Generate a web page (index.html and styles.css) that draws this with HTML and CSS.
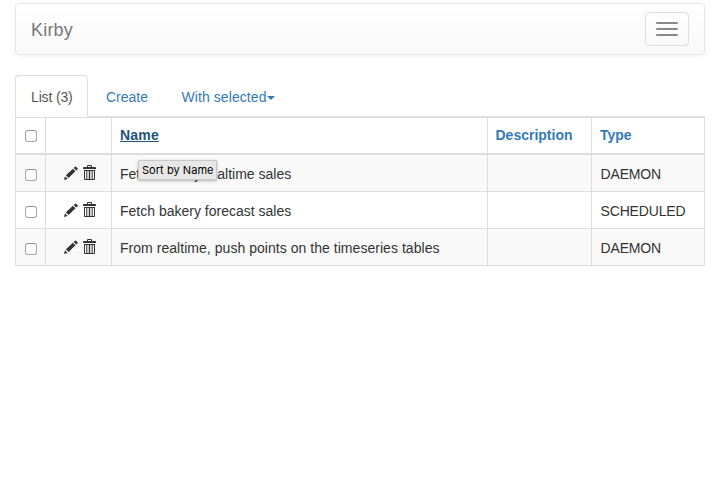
FILE: index.html
```html
<!DOCTYPE html>
<html lang="en">
<head>
<meta charset="utf-8">
<title>Kirby</title>
<link rel="stylesheet" href="styles.css">
</head>
<body>
<svg class="sprite" aria-hidden="true">
  <symbol id="pencil" viewBox="0 0 14 14">
    <path d="M0 14l1-3.700 2.700 2.700zM1.900 9.300l7-6.600 2.600 2.600-7 6.600zM9.700 2l1.300-1.300q.5-.5 1 0l1.600 1.600q.4.400 0 .9l-1.300 1.300z"/>
  </symbol>
  <symbol id="trash" viewBox="0 0 13 16">
    <path fill-rule="evenodd" d="M4 2V1q0-1 1-1h3q1 0 1 1v1h3q1 0 1 1v1H0V3q0-1 1-1zM5 1v1h3V1zM1 5h11v9q0 1-1 1H2q-1 0-1-1zM2 6v8h1.300V6zM4.300 6v8h1.500V6zM7.200 6v8h1.500V6zM9.700 6v8H11V6z"/>
  </symbol>
</svg>
<nav class="navbar">
  <a class="brand">Kirby</a>
  <button class="toggle" aria-label="Menu"><span></span><span></span><span></span></button>
</nav>
<ul class="tabs">
  <li class="tab active">List (3)</li>
  <li class="tab create">Create</li>
  <li class="tab selected">With selected<i class="caret"></i></li>
</ul>
<table class="list">
  <colgroup><col class="c-check"><col class="c-act"><col class="c-name"><col class="c-desc"><col class="c-type"></colgroup>
  <thead>
    <tr><th class="check"><input type="checkbox"></th><th></th><th><a class="hover">Name</a></th><th><a class="desc">Description</a></th><th><a>Type</a></th></tr>
  </thead>
  <tbody>
    <tr><td class="check"><input type="checkbox"></td><td><div class="actions"><svg class="pencil"><use href="#pencil"/></svg><svg class="trash"><use href="#trash"/></svg></div></td><td>Fetch bakery realtime sales</td><td></td><td class="type">DAEMON</td></tr>
    <tr><td class="check"><input type="checkbox"></td><td><div class="actions"><svg class="pencil"><use href="#pencil"/></svg><svg class="trash"><use href="#trash"/></svg></div></td><td>Fetch bakery forecast sales</td><td></td><td class="type">SCHEDULED</td></tr>
    <tr><td class="check"><input type="checkbox"></td><td><div class="actions"><svg class="pencil"><use href="#pencil"/></svg><svg class="trash"><use href="#trash"/></svg></div></td><td><span class="long">From realtime, push points on the timeseries tables</span></td><td></td><td class="type">DAEMON</td></tr>
  </tbody>
</table>
<div class="tooltip">Sort by Name</div>
</body>
</html>
```
FILE: styles.css
```css
* { box-sizing: border-box; }
body {
  margin: 0;
  padding: 3px 15px 0;
  background: #fff;
  color: #333;
  font: 14px/20px "Liberation Sans", Arial, sans-serif;
}
.sprite { display: none; }
.navbar {
  display: flex;
  justify-content: space-between;
  align-items: center;
  height: 52px;
  padding: 0 15px;
  border: 1px solid #e7e7e7;
  border-radius: 4px;
  background: linear-gradient(#fff, #f8f8f8);
  box-shadow: inset 0 1px 0 rgba(255,255,255,.15), 0 1px 5px rgba(0,0,0,.075);
}
.brand { font-size: 18px; letter-spacing: .2px; color: #777; padding-top: 1px; }
.toggle {
  display: flex;
  flex-direction: column;
  gap: 4px;
  width: 44px;
  height: 34px;
  padding: 9px 10px;
  border: 1px solid #ddd;
  border-radius: 4px;
  background: transparent;
}
.toggle span { width: 22px; height: 2px; border-radius: 1px; background: #888; }
.tabs {
  display: flex;
  gap: 2px;
  height: 42px;
  margin: 20px 0 0;
  padding: 0;
  list-style: none;
  border-bottom: 1px solid #ddd;
}
.tab {
  height: 42px;
  padding: 12px 16px;
  color: #337ab7;
  white-space: nowrap;
}
.tab.active {
  width: 73px;
  padding: 11px 15px;
  border: 1px solid #ddd;
  border-bottom-color: #fff;
  border-radius: 4px 4px 0 0;
  background: #fff;
  color: #555;
  letter-spacing: -.15px;
}
.tab.create { width: 73px; }
.tab.selected { padding-left: 16.5px; letter-spacing: .08px; }
.caret {
  display: inline-block;
  vertical-align: middle;
  border-top: 4px solid;
  border-left: 4px solid transparent;
  border-right: 4px solid transparent;
}
.list {
  width: 690px;
  table-layout: fixed;
  border-collapse: separate;
  border-spacing: 0;
  border-top: 1px solid #ddd;
  border-right: 1px solid #ddd;
}
.c-check { width: 30px; }
.c-act { width: 66px; }
.c-name { width: 376px; }
.c-desc { width: 104px; }
.c-type { width: 113px; }
th, td {
  height: 37px;
  padding: 1px 8px 0;
  border-left: 1px solid #ddd;
  border-bottom: 1px solid #ddd;
  text-align: left;
  vertical-align: middle;
  white-space: nowrap;
}
th { border-bottom-width: 2px; padding: 0 8px 1px; }
th a { color: #337ab7; }
th a.hover { color: #23527c; text-decoration: underline; letter-spacing: .2px; }
th a.desc { margin-left: -.5px; }
.long { letter-spacing: .04px; }
.type { letter-spacing: -.15px; padding-left: 8.5px; }
tbody tr:nth-child(odd) { background: #f9f9f9; }
.check { padding: 3px 0 0 9px; }
th.check { padding: 1px 0 0 9px; }
input {
  display: block;
  appearance: none;
  width: 12px;
  height: 12px;
  margin: 0;
  border: 1px solid #a5a5a5;
  border-top-color: #929292;
  border-radius: 3px;
  background: #fff;
}
.actions { display: flex; align-items: center; gap: 5px; padding-left: 10px; fill: #333; }
.pencil { width: 14px; height: 14px; margin-top: -2px; }
.trash { width: 13px; height: 16px; margin-top: -2px; }
.tooltip {
  position: absolute;
  left: 138px;
  top: 160px;
  width: 79px;
  height: 20px;
  padding-left: 3px;
  border: 1px solid #c8c8c8;
  border-radius: 1px;
  background: #e7e7e7;
  box-shadow: 0 1px 3px rgba(0,0,0,.3);
  color: #000;
  font: 11px/18px Inter, sans-serif;
  letter-spacing: .05px;
  white-space: nowrap;
}
```
